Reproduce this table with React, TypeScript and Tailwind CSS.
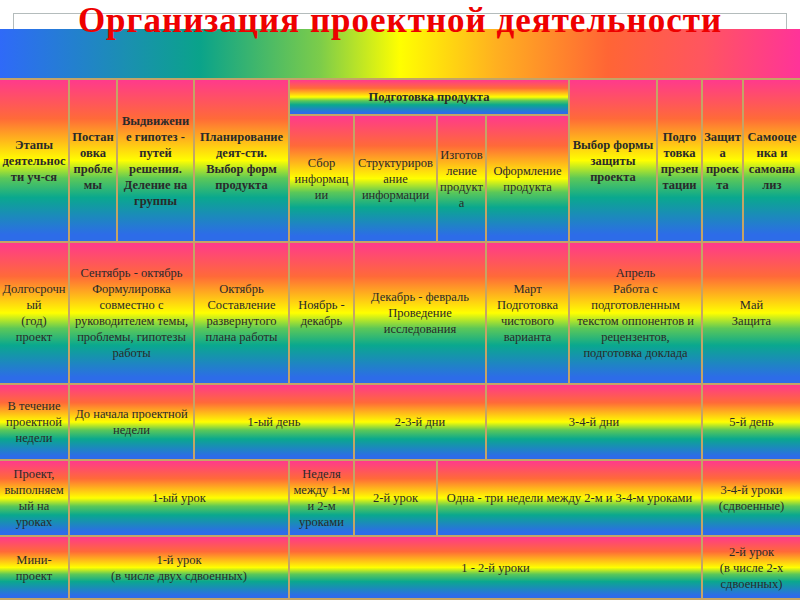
const cellBg =
  "bg-[linear-gradient(180deg,#ff3a8c_0%,#ff6a38_24%,#ffff00_50%,#5cc858_61%,#0aa88e_73%,#2d6ce8_96%)]";

type Cell = {
  lines: string[];
  span?: string;
  bold?: boolean;
};

const cells: Cell[] = [
  // header
  { lines: ["Этапы", "деятельнос", "ти уч-ся"], span: "row-span-2", bold: true },
  { lines: ["Постан", "овка", "пробле", "мы"], span: "row-span-2", bold: true },
  { lines: ["Выдвижени", "е гипотез -", "путей", "решения.", "Деление на", "группы"], span: "row-span-2", bold: true },
  { lines: ["Планирование", "деят-сти.", "Выбор форм", "продукта"], span: "row-span-2", bold: true },
  { lines: ["Подготовка продукта"], span: "col-span-4", bold: true },
  { lines: ["Выбор формы", "защиты", "проекта"], span: "row-span-2", bold: true },
  { lines: ["Подго", "товка", "презен", "тации"], span: "row-span-2", bold: true },
  { lines: ["Защит", "а", "проек", "та"], span: "row-span-2", bold: true },
  { lines: ["Самооце", "нка и", "самоана", "лиз"], span: "row-span-2", bold: true },
  { lines: ["Сбор", "информац", "ии"] },
  { lines: ["Структуриров", "ание", "информации"] },
  { lines: ["Изготов", "ление", "продукт", "а"] },
  { lines: ["Оформление", "продукта"] },
  // long project
  { lines: ["Долгосрочн", "ый", "(год)", "проект"] },
  {
    lines: ["Сентябрь - октябрь", "Формулировка", "совместно с", "руководителем темы,", "проблемы, гипотезы", "работы"],
    span: "col-span-2",
  },
  { lines: ["Октябрь", "Составление", "развернутого", "плана работы"] },
  { lines: ["Ноябрь -", "декабрь"] },
  { lines: ["Декабрь - февраль", "Проведение", "исследования"], span: "col-span-2" },
  { lines: ["Март", "Подготовка", "чистового", "варианта"] },
  {
    lines: ["Апрель", "Работа с", "подготовленным", "текстом оппонентов и", "рецензентов,", "подготовка доклада"],
    span: "col-span-2",
  },
  { lines: ["Май", "Защита"], span: "col-span-2" },
  // project week
  { lines: ["В течение", "проектной", "недели"] },
  { lines: ["До начала проектной", "недели"], span: "col-span-2" },
  { lines: ["1-ый день"], span: "col-span-2" },
  { lines: ["2-3-й дни"], span: "col-span-2" },
  { lines: ["3-4-й дни"], span: "col-span-3" },
  { lines: ["5-й день"], span: "col-span-2" },
  // lessons
  { lines: ["Проект,", "выполняем", "ый на", "уроках"] },
  { lines: ["1-ый урок"], span: "col-span-3" },
  { lines: ["Неделя", "между 1-м", "и 2-м", "уроками"] },
  { lines: ["2-й урок"] },
  { lines: ["Одна - три недели между 2-м и 3-4-м уроками"], span: "col-span-4" },
  { lines: ["3-4-й уроки", "(сдвоенные)"], span: "col-span-2" },
  // mini
  { lines: ["Мини-", "проект"] },
  { lines: ["1-й урок", "(в числе двух сдвоенных)"], span: "col-span-3" },
  { lines: ["1 - 2-й уроки"], span: "col-span-6" },
  { lines: ["2-й урок", "(в числе 2-х", "сдвоенных)"], span: "col-span-2" },
];

export default function App() {
  return (
    <div className="w-[800px] h-[600px] overflow-hidden bg-white font-['Liberation_Serif',serif]">
      {/* title + rainbow band */}
      <div className="relative h-[78px]">
        <div className="absolute left-[13px] top-[13px] w-[774px] h-[30px] border border-[#b4bcbc]" />
        <div className="absolute left-0 right-0 top-[29px] h-[49px] bg-[linear-gradient(90deg,#2f6af8_0%,#1a90b0_16%,#0aa38a_25%,#7ccc4a_40%,#ffff00_50%,#ffb020_62%,#ff6535_76%,#ff5560_88%,#ff3399_100%)]" />
        <h1 className="absolute left-0 right-0 top-[2px] text-center text-[35px] leading-[38px] font-bold text-[#ee0000] tracking-[1px]">
          Организация проектной деятельности
        </h1>
      </div>

      {/* table */}
      <div className="grid grid-cols-[68px_46px_75px_93px_63px_81px_47px_81px_86px_43px_39px_1fr] grid-rows-[34px_125px_140px_74px_74px_61px] gap-[2px] bg-[#c4a466] pt-[2px] pb-[2px]">
        {cells.map((c, i) => (
          <div
            key={i}
            className={`${c.span ?? ""} ${cellBg} flex items-center justify-center text-center text-[#2a2a2a] leading-[16px] whitespace-nowrap overflow-hidden ${
              c.bold ? "font-bold text-[12.5px]" : "text-[12.5px]"
            }`}
          >
            <div>
              {c.lines.map((l, j) => (
                <div key={j}>{l}</div>
              ))}
            </div>
          </div>
        ))}
      </div>
    </div>
  );
}
